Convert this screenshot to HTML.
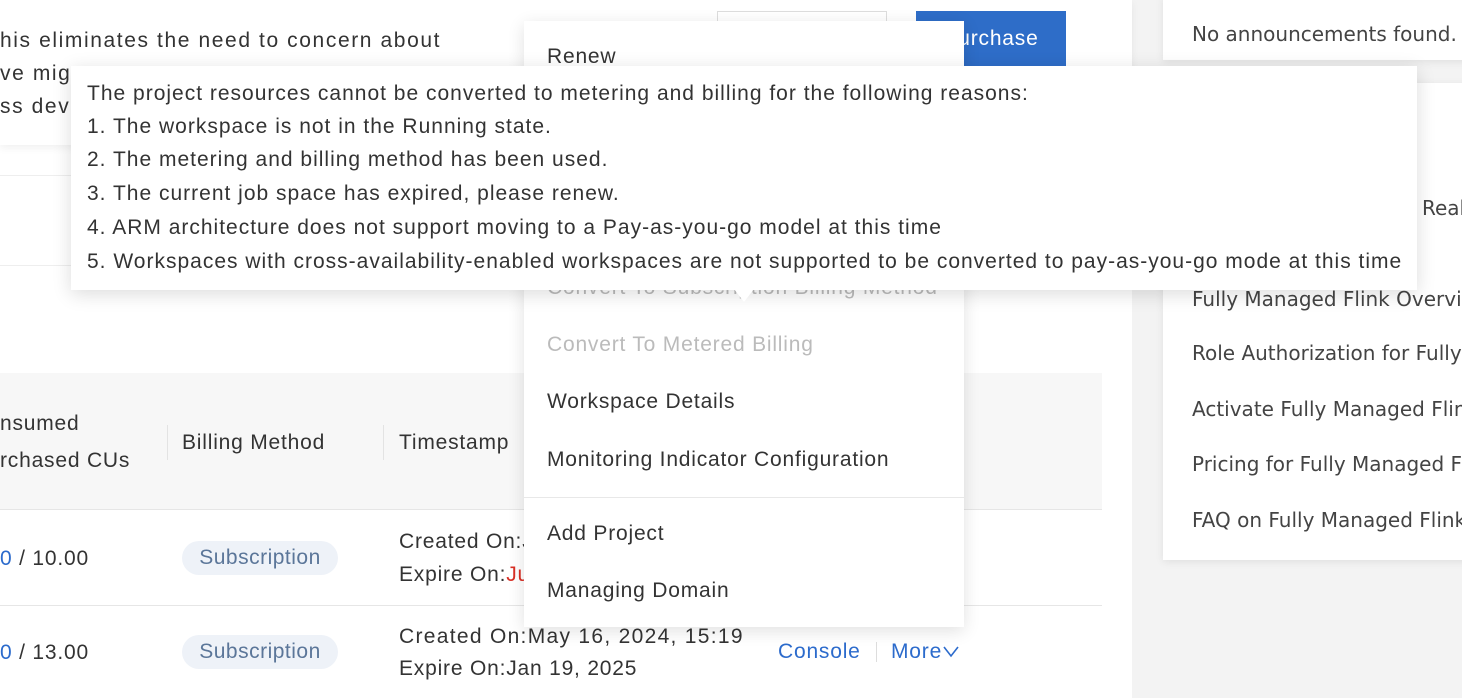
<!DOCTYPE html>
<html><head><meta charset="utf-8"><style>
*{margin:0;padding:0;box-sizing:border-box}
body{width:1462px;height:698px;overflow:hidden;background:#f3f3f3;font-family:"Liberation Sans",Arial,sans-serif;color:#333;font-size:21px;letter-spacing:.8px;position:relative}
.a{position:absolute;white-space:nowrap}
.main{position:absolute;left:0;top:0;width:1132px;height:698px;background:#fff}
.card{position:absolute;background:#fff;box-shadow:0 2px 8px rgba(0,0,0,.08)}
.r{font-family:"DejaVu Sans",sans-serif;font-size:20px;letter-spacing:0;color:#444}
.menu{position:absolute;left:524px;top:21px;width:440px;height:606px;background:#fff;box-shadow:0 4px 16px rgba(0,0,0,.12)}
.menu .a{left:23px}
.dis{color:#bbb}
.tip{position:absolute;left:71px;top:66px;width:1346px;height:224px;background:#fff;box-shadow:0 4px 18px rgba(0,0,0,.14)}
.tip .a{left:16px;letter-spacing:1px}
.tag{position:absolute;left:182px;width:156px;height:34px;border-radius:17px;background:#eef2f8;color:#5b7699;text-align:center;line-height:34px;letter-spacing:.5px}
.blue{color:#2c6bcc}
</style></head><body>
<div class="main">
  <div style="position:absolute;left:0;top:0;width:1132px;height:145px;background:#fff;box-shadow:0 3px 8px rgba(0,0,0,.06)"></div>
  <div class="a" style="left:0;top:29px;letter-spacing:1.6px">his eliminates the need to concern about</div>
  <div class="a" style="left:0;top:62px;letter-spacing:1.6px">ve mig</div>
  <div class="a" style="left:0;top:95px;letter-spacing:1.6px">ss dev</div>
  <div style="position:absolute;left:717px;top:11px;width:170px;height:55px;border:1px solid #ddd;background:#fff"></div>
  <div style="position:absolute;left:916px;top:11px;width:150px;height:55px;background:#2e6dc8;color:#fff;line-height:55px;text-align:center">Purchase</div>
  <div style="position:absolute;left:0;top:175px;width:1102px;height:1px;background:#eee"></div>
  <div style="position:absolute;left:0;top:265px;width:1102px;height:1px;background:#eee"></div>
  <div style="position:absolute;left:0;top:373px;width:1102px;height:137px;background:#f7f7f7;border-bottom:1px solid #e6e6e6"></div>
  <div class="a" style="left:0;top:412px">nsumed</div>
  <div class="a" style="left:0;top:449px">rchased CUs</div>
  <div style="position:absolute;left:167px;top:425px;width:1px;height:35px;background:#e3e3e3"></div>
  <div class="a" style="left:182px;top:431px">Billing Method</div>
  <div style="position:absolute;left:383px;top:425px;width:1px;height:35px;background:#e3e3e3"></div>
  <div class="a" style="left:399px;top:431px">Timestamp</div>
  <div style="position:absolute;left:0;top:605px;width:1102px;height:1px;background:#e6e6e6"></div>
  <div class="a" style="left:0;top:547px"><span class="blue">0</span> / 10.00</div>
  <div class="tag" style="top:541px">Subscription</div>
  <div class="a" style="left:399px;top:530px">Created On:J</div>
  <div class="a" style="left:399px;top:563px">Expire On:<span style="color:#d93026">Ju</span></div>
  <div class="a" style="left:0;top:641px"><span class="blue">0</span> / 13.00</div>
  <div class="tag" style="top:635px">Subscription</div>
  <div class="a" style="left:399px;top:625px;letter-spacing:1.3px">Created On:May 16, 2024, 15:19</div>
  <div class="a" style="left:399px;top:657px;letter-spacing:.8px">Expire On:Jan 19, 2025</div>
  <div class="a blue" style="left:778px;top:640px">Console</div>
  <div style="position:absolute;left:876px;top:642px;width:1px;height:20px;background:#ddd"></div>
  <div class="a blue" style="left:891px;top:640px">More<svg width="20" height="14" viewBox="0 0 20 14" style="margin-left:0"><path d="M2 3 L9 12 L16 3" fill="none" stroke="#2c6bcc" stroke-width="1.6"/></svg></div>
</div>
<div class="card" style="left:1163px;top:-5px;width:310px;height:65px"></div>
<div class="a r" style="left:1192px;top:22px">No announcements found.</div>
<div class="card" style="left:1163px;top:83px;width:310px;height:477px"></div>
<div class="a r" style="left:1422px;top:196px">Real</div>
<div class="a r" style="left:1192px;top:287px">Fully Managed Flink Overview</div>
<div class="a r" style="left:1192px;top:341px">Role Authorization for Fully</div>
<div class="a r" style="left:1192px;top:397px">Activate Fully Managed Flink</div>
<div class="a r" style="left:1192px;top:452px">Pricing for Fully Managed F</div>
<div class="a r" style="left:1192px;top:508px">FAQ on Fully Managed Flink</div>

<div class="menu">
  <div class="a" style="top:24px">Renew</div>
  <div class="a dis" style="top:255px">Convert To Subscription Billing Method</div>
  <div class="a dis" style="top:312px">Convert To Metered Billing</div>
  <div class="a" style="top:369px">Workspace Details</div>
  <div class="a" style="top:427px">Monitoring Indicator Configuration</div>
  <div style="position:absolute;left:0;top:476px;width:440px;height:1px;background:#e8e8e8"></div>
  <div class="a" style="top:501px">Add Project</div>
  <div class="a" style="top:558px">Managing Domain</div>
</div>
<div class="tip">
  <div class="a" style="top:16px">The project resources cannot be converted to metering and billing for the following reasons:</div>
  <div class="a" style="top:49px">1. The workspace is not in the Running state.</div>
  <div class="a" style="top:82px">2. The metering and billing method has been used.</div>
  <div class="a" style="top:116px">3. The current job space has expired, please renew.</div>
  <div class="a" style="top:150px">4. ARM architecture does not support moving to a Pay-as-you-go model at this time</div>
  <div class="a" style="top:184px">5. Workspaces with cross-availability-enabled workspaces are not supported to be converted to pay-as-you-go mode at this time</div>
</div>
<div style="position:absolute;left:734px;top:289px;width:0;height:0;border-left:10px solid transparent;border-right:10px solid transparent;border-top:13px solid #fff"></div>
</body></html>
